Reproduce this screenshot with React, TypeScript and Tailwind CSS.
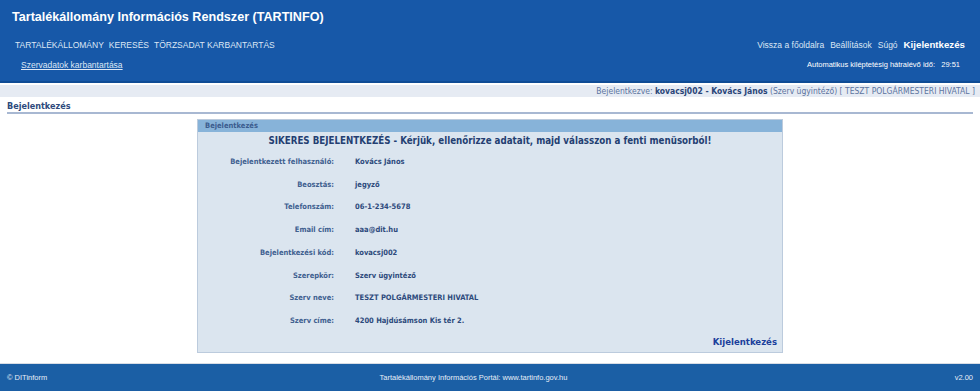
const rows: [string, string][] = [
  ["Bejelentkezett felhasználó:", "Kovács János"],
  ["Beosztás:", "jegyző"],
  ["Telefonszám:", "06-1-234-5678"],
  ["Email cím:", "aaa@dit.hu"],
  ["Bejelentkezési kód:", "kovacsj002"],
  ["Szerepkör:", "Szerv ügyintéző"],
  ["Szerv neve:", "TESZT POLGÁRMESTERI HIVATAL"],
  ["Szerv címe:", "4200 Hajdúsámson Kis tér 2."],
];

const App = () => {
  return (
    <div className="flex h-[391px] flex-col bg-white font-['Liberation_Sans',Arial,sans-serif]">
      {/* header */}
      <div className="h-[83px] border-b-2 border-[#0f4c95] bg-[#1758a8] text-[#dde7f5]">
        <div className="px-3 pt-[8px] text-[12.6px] font-bold leading-[18px] text-white">
          Tartalékállomány Információs Rendszer (TARTINFO)
        </div>
        <div className="mt-[12px] flex items-center justify-between pl-[15px] pr-[15px] text-[8.5px] leading-[14px]">
          <div className="flex gap-[5px]">
            <span>TARTALÉKÁLLOMÁNY</span>
            <span>KERESÉS</span>
            <span>TÖRZSADAT KARBANTARTÁS</span>
          </div>
          <div className="flex items-center gap-[6px]">
            <span>Vissza a főoldalra</span>
            <span>Beállítások</span>
            <span>Súgó</span>
            <span className="text-[9.7px] font-bold text-white">Kijelentkezés</span>
          </div>
        </div>
        <div className="mt-[7px] flex items-center justify-between pl-[21px] pr-[20px] text-[7.5px] leading-[12px]">
          <span className="text-[8.5px] underline">Szervadatok karbantartása</span>
          <span className="text-white">
            Automatikus kiléptetésig hátralévő idő:&nbsp;&nbsp; 29:51
          </span>
        </div>
      </div>

      {/* main */}
      <div className="flex-1 font-['DejaVu_Sans_Condensed',Tahoma,sans-serif]">
        <div className="mt-[2px] flex h-[12px] items-center justify-end bg-[#e6ebf3] pr-[5px] text-[8.5px] text-[#5c74a0]">
          <span>
            Bejelentkezve: <b className="text-[#2a4578]">kovacsj002 - Kovács János</b> (Szerv ügyintéző) [ TESZT POLGÁRMESTERI HIVATAL ]
          </span>
        </div>
        <div className="mx-[7px] mt-[3px] border-b-2 border-[#a8b8d2] text-[9px] font-bold leading-[12px] text-[#2d4a7c]">
          Bejelentkezés
        </div>
        <div className="mx-auto mt-[5px] w-[586px] border border-[#bccbdd] bg-[#dbe5ef] text-[#2d4a7c]">
          <div className="flex h-[12px] items-center bg-[#87b3d9] pl-[7px] text-[7.5px] font-bold text-[#3b5c8e]">
            Bejelentkezés
          </div>
          <div className="pt-[2px] text-center text-[9.7px] font-bold leading-[14px] text-[#243f72]">
            SIKERES BEJELENTKEZÉS - Kérjük, ellenőrizze adatait, majd válasszon a fenti menüsorból!
          </div>
          <div className="mt-[7px] flex flex-col gap-[9px] text-[7.5px] font-bold leading-[13.7px]">
            {rows.map(([label, value]) => (
              <div key={label} className="flex">
                <div className="w-[136px] text-right text-[#40608f]">{label}</div>
                <div className="pl-[21px] text-[#2d4a7c]">{value}</div>
              </div>
            ))}
          </div>
          <div className="mt-[7px] pb-[3px] pr-[5px] text-right text-[9.5px] font-bold leading-[14px] text-[#1b3f9c]">
            Kijelentkezés
          </div>
        </div>
      </div>

      {/* footer */}
      <div className="flex h-[28px] items-center justify-between border-t border-[#d8dde5] bg-[#1b5fa5] px-[7px] text-[7.5px] text-[#e6eef8]">
        <span>© DITinform</span>
        <span className="pr-[55px]">Tartalékállomány Információs Portál: www.tartinfo.gov.hu</span>
        <span>v2.00</span>
      </div>
    </div>
  );
};

export default App;
